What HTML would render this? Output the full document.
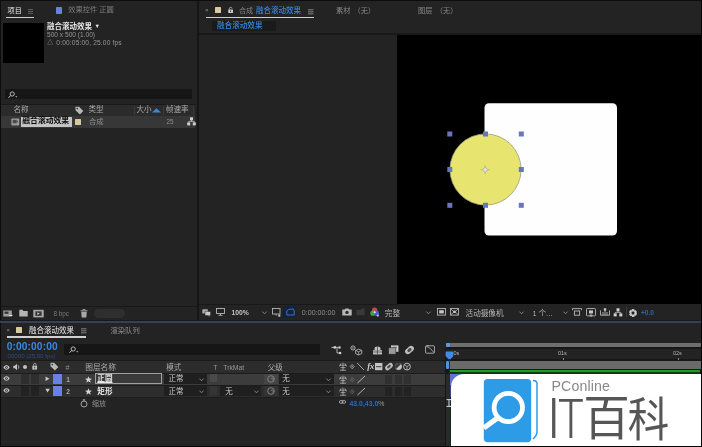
<!DOCTYPE html>
<html lang="zh-CN">
<head>
<meta charset="utf-8">
<title>融合滚动效果</title>
<style>
html,body{margin:0;padding:0;background:#232323;}
body{width:702px;height:447px;position:relative;overflow:hidden;font-family:"Liberation Sans","Noto Sans CJK SC",sans-serif;color:#b4b4b4;font-size:7.5px;line-height:1;}
.a{position:absolute;}
.t{position:absolute;white-space:nowrap;line-height:1;filter:blur(0.35px);}
.w{color:#e6e6e6;}
.g{color:#8f8f8f;}
.b{color:#3a84e2;}
svg{position:absolute;overflow:visible;filter:blur(0.3px);}
</style>
</head>
<body>
<!-- ===== base frame ===== -->
<div class="a" style="left:0;top:0;width:702px;height:1px;background:#0c0c0c"></div>
<div class="a" style="left:0;top:0;width:1px;height:447px;background:#0c0c0c"></div>
<div class="a" style="left:0;top:446px;width:702px;height:1px;background:#050505"></div>
<div class="a" style="left:700.5px;top:0;width:1.5px;height:447px;background:#050505"></div>

<!-- ===== PROJECT PANEL ===== -->
<div id="project">
<div class="t w" style="left:7.5px;top:6.5px;font-size:7.2px">项目</div>
<svg style="left:28px;top:9.2px" width="6" height="6" viewBox="0 0 6 6"><path d="M0 0.6h5M0 2.5h5M0 4.4h5" stroke="#7a7a7a" stroke-width="0.7" fill="none"/></svg>
<div class="a" style="left:6px;top:17px;width:27.5px;height:1.4px;background:#d0d0d0"></div>
<div class="a" style="left:56px;top:7.4px;width:6px;height:6.2px;background:#6a7fe6;border-radius:0.8px"></div>
<div class="t" style="left:68.3px;top:6.3px;font-size:7.25px;color:#7c7c7c">效果控件 正圆</div>
<!-- thumbnail -->
<div class="a" style="left:3.2px;top:22.7px;width:40.4px;height:40px;background:#000"></div>
<div class="t w" style="left:47px;top:23px;font-size:7.5px;font-weight:700">融合滚动效果 <span style="font-size:5.6px;position:relative;top:-0.8px;left:0.5px">▼</span></div>
<div class="t" style="left:47px;top:31.5px;font-size:6.6px;color:#969696">500 x 500 (1.00)</div>
<div class="t" style="left:47.2px;top:39.8px;font-size:5.8px;color:#a0a0a0;font-weight:700">△</div><div class="t" style="left:56.3px;top:39.5px;font-size:6.6px;letter-spacing:0.17px;color:#969696">0:00:05:00, 25.00 fps</div>
<!-- search -->
<div class="a" style="left:5px;top:88.7px;width:187px;height:10.5px;background:#161616;border-radius:1px"></div>
<svg style="left:8px;top:90.5px" width="10" height="8" viewBox="0 0 10 8"><circle cx="4.2" cy="3" r="2.1" stroke="#c8c8c8" stroke-width="0.9" fill="none"/><path d="M2.6 4.6L0.5 6.8" stroke="#c8c8c8" stroke-width="1"/><path d="M7.2 5.2h2.2l-1.1 1.3z" fill="#c8c8c8"/></svg>
<!-- header row -->
<div class="a" style="left:1px;top:104.5px;width:194px;height:11px;background:#2b2b2b"></div>
<div class="a" style="left:1px;top:104px;width:195px;height:1px;background:#191919"></div>
<div class="t" style="left:13.5px;top:106.4px;font-size:7.55px;color:#a8a8a8">名称</div>
<svg style="left:75px;top:105.5px" width="9" height="9" viewBox="0 0 9 9"><path d="M0.5 0.8h3.6l4.2 4.2-3.4 3.4L0.5 4.2z" fill="#b8b8b8"/><circle cx="2.3" cy="2.6" r="0.8" fill="#2b2b2b"/></svg>
<div class="t" style="left:88.5px;top:106.4px;font-size:7.55px;color:#a8a8a8">类型</div>
<div class="a" style="left:133.5px;top:105.5px;width:1px;height:9.5px;background:#3a3a3a"></div>
<div class="t" style="left:136.5px;top:106.4px;font-size:7.55px;color:#a8a8a8">大小</div>
<svg style="left:151.5px;top:107.5px" width="9" height="5" viewBox="0 0 9 5"><path d="M0 4.5L4.5 0.3 9 4.5z" fill="#3f87dc"/></svg>
<div class="a" style="left:162.5px;top:105.5px;width:1px;height:9.5px;background:#3a3a3a"></div>
<div class="t" style="left:166px;top:106.4px;font-size:7.55px;color:#a8a8a8">帧速率</div>
<div class="a" style="left:192.5px;top:105.5px;width:1px;height:9.5px;background:#3a3a3a"></div>
<!-- item row -->
<div class="a" style="left:1px;top:116px;width:194px;height:11.5px;background:#373737"></div>
<svg style="left:10.5px;top:117.8px" width="8.6" height="8" viewBox="0 0 10 9"><rect x="0.4" y="0.4" width="9.2" height="8.2" rx="0.8" fill="#9a9a9a"/><rect x="2" y="2" width="4.5" height="4" fill="#4a4a4a"/><path d="M6.5 2.6l2 1.4-2 1.4z" fill="#4a4a4a"/></svg>
<div class="a" style="left:21px;top:116.5px;width:50.5px;height:10.5px;background:#c4c4c4"></div>
<div class="t" style="left:22.3px;top:117.4px;font-size:7.8px;font-weight:700;color:#0a0a0a">融合滚动效果</div>
<div class="a" style="left:75.3px;top:119px;width:5.5px;height:5.6px;background:#d8c9a0;border-radius:0.6px"></div>
<div class="t g" style="left:89px;top:118px;font-size:7.3px">合成</div>
<div class="t g" style="left:166.5px;top:118.5px;font-size:6.4px">25</div>
<svg style="left:186.5px;top:117px" width="9" height="9" viewBox="0 0 9 9"><rect x="3" y="0.3" width="3" height="3" fill="#d0d0d0"/><rect x="0.2" y="5.4" width="3" height="3" fill="#d0d0d0"/><rect x="5.8" y="5.4" width="3" height="3" fill="#d0d0d0"/><path d="M4.5 3v1.5M1.7 5.4V4.4h5.6v1" stroke="#d0d0d0" stroke-width="0.7" fill="none"/></svg>
<!-- bottom bar -->
<div class="a" style="left:1px;top:305.9px;width:195.5px;height:1px;background:#181818"></div>
<svg style="left:3px;top:308.5px" width="10" height="9" viewBox="0 0 10 9"><rect x="0.3" y="1.5" width="8.5" height="6" fill="#a0a0a0"/><rect x="1.5" y="2.6" width="4" height="2.2" fill="#333"/><path d="M6 6.5h3.5" stroke="#ddd" stroke-width="1"/></svg>
<svg style="left:19px;top:309px" width="9" height="8" viewBox="0 0 9 8"><path d="M0.3 0.8h3.2l0.9 1.1h4.3v5.6H0.3z" fill="#b4b4b4"/></svg>
<svg style="left:33px;top:308.5px" width="11" height="9" viewBox="0 0 11 9"><rect x="0.3" y="0.8" width="10.4" height="7.6" fill="#a8a8a8"/><rect x="2.4" y="2.4" width="6.2" height="4.4" fill="#333"/><path d="M4.4 3.3l2.3 1.3-2.3 1.3z" fill="#ccc"/></svg>
<div class="t" style="left:53.6px;top:311px;font-size:6.3px;color:#7a7a7a">8 bpc</div>
<svg style="left:80px;top:308.5px" width="8" height="9" viewBox="0 0 8 9"><path d="M0.5 1.8h7M2.8 1.6V0.6h2.4v1" stroke="#a8a8a8" stroke-width="0.9" fill="none"/><path d="M1.2 2.8h5.6l-0.5 5.8H1.7z" fill="#a8a8a8"/></svg>
<div class="a" style="left:94px;top:309px;width:30.5px;height:9px;background:#2f2f2f;border-radius:4.5px"></div>
</div>

<!-- vertical divider project/viewer -->
<div class="a" style="left:197.3px;top:1px;width:1.4px;height:320px;background:#161616"></div>

<!-- ===== VIEWER PANEL ===== -->
<div id="viewer">
<!-- tab row -->
<div class="t g" style="left:205px;top:7px;font-size:6px">×</div>
<div class="a" style="left:215px;top:7px;width:6.4px;height:6px;background:#d8c9a0;border-radius:0.6px"></div>
<svg style="left:228px;top:6.7px" width="5.2" height="6.4" viewBox="0 0 6 8" preserveAspectRatio="none"><rect x="0.3" y="3.2" width="5.4" height="4.3" fill="#d0d0d0"/><path d="M1.6 3.2V2a1.5 1.5 0 0 1 3 0" stroke="#d0d0d0" stroke-width="0.9" fill="none"/><rect x="2.4" y="4.4" width="1.2" height="1.8" fill="#333"/></svg>
<div class="t" style="left:238.9px;top:6.7px;font-size:7.2px;color:#848484">合成</div>
<div class="t b" style="left:256px;top:6.8px;font-size:7.5px;font-weight:500">融合滚动效果</div>
<svg style="left:308px;top:8.5px" width="6" height="6" viewBox="0 0 6 6"><path d="M0 0.8h5.5M0 2.8h5.5M0 4.8h5.5" stroke="#9a9a9a" stroke-width="0.8" fill="none"/></svg>
<div class="a" style="left:206px;top:17px;width:107.5px;height:1.4px;background:#d0d0d0"></div>
<div class="t" style="left:336px;top:6.9px;font-size:7.2px;color:#8a8a8a;word-spacing:1.2px">素材 （无）</div>
<div class="t" style="left:418px;top:6.9px;font-size:7.2px;color:#8a8a8a;word-spacing:1.5px">图层 （无）</div>
<!-- breadcrumb -->
<div class="a" style="left:212px;top:21px;width:64px;height:10.1px;background:#1a1a1a"></div>
<div class="t b" style="left:217px;top:22.4px;font-size:7.6px;font-weight:500">融合滚动效果</div>
<div class="a" style="left:199px;top:33px;width:501px;height:1.5px;background:#181818"></div>
<!-- black canvas -->
<div class="a" style="left:396.8px;top:34.5px;width:304px;height:269.5px;background:#000"></div>
<div class="a" style="left:199px;top:303.5px;width:198.5px;height:1px;background:#181818"></div>
<!-- shapes -->
<svg style="left:397px;top:34px;filter:blur(0.4px)" width="303" height="270" viewBox="397 34 303 270">
<rect x="484.5" y="103.2" width="132.5" height="132.3" rx="4.5" fill="#fefefe"/>
<circle cx="485.5" cy="169.5" r="35.6" fill="#e8e470" stroke="#9c9c7c" stroke-width="0.8"/>
<g fill="#6776be">
<rect x="447.3" y="131.5" width="5" height="5"/><rect x="483" y="131.5" width="5" height="5"/><rect x="518.8" y="131.5" width="5" height="5"/>
<rect x="447.3" y="167" width="5" height="5"/><rect x="518.8" y="167" width="5" height="5"/>
<rect x="447.3" y="202.8" width="5" height="5"/><rect x="483" y="202.8" width="5" height="5"/><rect x="518.8" y="202.8" width="5" height="5"/>
</g>
<g stroke="#a8a8a0" stroke-width="0.8" fill="none"><path d="M485.2 166.9l2.6 2.8-2.6 2.8-2.6-2.8z" fill="#e4e4c8"/><path d="M485.2 165.2v1.7M485.2 172.5v1.7M480.8 169.7h1.8M487.8 169.7h1.8"/></g>
</svg>
<!-- viewer toolbar -->
<div id="vtool">
<svg style="left:202.4px;top:308.9px" width="9" height="8" viewBox="0 0 9 8"><rect x="0.3" y="0.3" width="5.6" height="4.2" rx="0.6" fill="#a8a8a8"/><rect x="3" y="2.4" width="5.6" height="4.2" rx="0.6" fill="#c8c8c8" stroke="#232323" stroke-width="0.5"/><path d="M6 6.4l1.4 1.4v-1.4z" fill="#c8c8c8"/></svg>
<svg style="left:216px;top:308.3px" width="9" height="8" viewBox="0 0 9 8"><rect x="0.5" y="0.5" width="8" height="5" stroke="#b4b4b4" stroke-width="0.9" fill="none"/><path d="M4.5 5.5v1.5M2.5 7.3h4" stroke="#b4b4b4" stroke-width="0.9"/></svg>
<div class="t" style="left:231.5px;top:310.1px;font-size:6.8px;color:#c4c4c4;font-weight:700">100%</div>
<svg style="left:261.5px;top:310.6px" width="5" height="4" viewBox="0 0 5 4"><path d="M0.4 0.6L2.5 2.8 4.6 0.6" stroke="#8c8c8c" stroke-width="0.9" fill="none"/></svg>
<svg style="left:272px;top:308.1px" width="9" height="9" viewBox="0 0 9 9"><rect x="0.5" y="0.5" width="7.5" height="5.5" stroke="#b4b4b4" stroke-width="0.9" fill="none"/><path d="M4.2 6v1.6" stroke="#b4b4b4" stroke-width="0.9"/><rect x="6.3" y="6.6" width="2" height="2" fill="#d0d0d0"/></svg>
<div class="a" style="left:283.3px;top:306.2px;width:13px;height:11.4px;background:#14233a"></div>
<svg style="left:285.5px;top:308.3px" width="9" height="8" viewBox="0 0 9 8"><path d="M0.8 7V3l1.6-1.4L7.2 0.9l1 1.9V7z" stroke="#3a7bd0" stroke-width="0.9" fill="none"/></svg>
<div class="t" style="left:301.8px;top:310.4px;font-size:7.1px;color:#8c8c8c">0:00:00:00</div>
<svg style="left:341.5px;top:308.3px" width="10" height="8" viewBox="0 0 10 8"><path d="M0.3 1.6h2.4l0.8-1.2h3l0.8 1.2h2.4v5.8H0.3z" fill="#b8b8b8"/><circle cx="5" cy="4.4" r="1.7" fill="#2a2a2a"/></svg>
<svg style="left:356px;top:308.3px" width="9" height="8" viewBox="0 0 9 8"><path d="M0.5 2h4l2-1.6h2v6.8H0.5z" fill="#3a3a3a"/></svg>
<svg style="left:369.5px;top:306.8px" width="10" height="11" viewBox="0 0 10 11"><circle cx="4.6" cy="3.2" r="2.6" fill="#d04646"/><circle cx="2.9" cy="6.2" r="2.6" fill="#46b446" fill-opacity="0.9"/><circle cx="6.4" cy="6.2" r="2.6" fill="#4a64dc" fill-opacity="0.9"/><circle cx="4.7" cy="5.2" r="1" fill="#e8e8e8"/><circle cx="7.8" cy="8.6" r="1.1" fill="#c8c8f0"/></svg>
<div class="t" style="left:384.8px;top:309.5px;font-size:7.6px;color:#b8b8b8">完整</div>
<svg style="left:425.5px;top:310.6px" width="5" height="4" viewBox="0 0 5 4"><path d="M0.4 0.6L2.5 2.8 4.6 0.6" stroke="#8c8c8c" stroke-width="0.9" fill="none"/></svg>
<svg style="left:437px;top:308.3px" width="9" height="8" viewBox="0 0 9 8"><rect x="0.5" y="0.5" width="8" height="6.6" stroke="#b4b4b4" stroke-width="0.9" fill="none"/><rect x="2.2" y="2.2" width="4.6" height="3.2" fill="#c8c8c8"/></svg>
<svg style="left:450px;top:308.3px" width="9" height="8" viewBox="0 0 9 8"><rect x="0.5" y="0.5" width="8" height="6.6" stroke="#b4b4b4" stroke-width="0.9" fill="none"/><path d="M1 1l2.6 2.6M8 1L5.4 3.6M1 6.6l2.6-2.4M8 6.6L5.4 4.2" stroke="#b4b4b4" stroke-width="0.8"/><rect x="3.2" y="2.6" width="2.6" height="2.4" fill="#c8c8c8"/></svg>
<div class="t" style="left:465.6px;top:309.5px;font-size:7.6px;color:#b8b8b8">活动摄像机</div>
<svg style="left:518.5px;top:310.6px" width="5" height="4" viewBox="0 0 5 4"><path d="M0.4 0.6L2.5 2.8 4.6 0.6" stroke="#8c8c8c" stroke-width="0.9" fill="none"/></svg>
<div class="t" style="left:532.7px;top:309.5px;font-size:7.6px;color:#b8b8b8"><span style="font-size:6.6px">1</span> 个...</div>
<svg style="left:562.5px;top:310.6px" width="5" height="4" viewBox="0 0 5 4"><path d="M0.4 0.6L2.5 2.8 4.6 0.6" stroke="#8c8c8c" stroke-width="0.9" fill="none"/></svg>
<svg style="left:572px;top:308.3px" width="10" height="8" viewBox="0 0 10 8"><path d="M0.5 2.2V0.6h9v1.6" stroke="#b8b8b8" stroke-width="0.9" fill="none"/><rect x="2.4" y="3" width="5.2" height="4.2" stroke="#b8b8b8" stroke-width="0.9" fill="none"/></svg>
<svg style="left:586px;top:307.8px" width="10" height="9" viewBox="0 0 10 9"><rect x="0.5" y="0.5" width="9" height="7.4" rx="0.8" stroke="#b8b8b8" stroke-width="0.9" fill="none"/><rect x="3" y="2.4" width="4" height="3" fill="#c8c8c8"/><path d="M5 5.4v2.8M3.4 7l1.6 1.4L6.6 7" stroke="#c8c8c8" stroke-width="0.8" fill="none"/></svg>
<svg style="left:600px;top:308.3px" width="10" height="8" viewBox="0 0 10 8"><path d="M0.5 2.4v4.8h9V2.4" stroke="#b8b8b8" stroke-width="0.9" fill="none"/><path d="M3 7V4M5 7V0.6M7 7V4" stroke="#b8b8b8" stroke-width="0.9"/><rect x="3.8" y="0.3" width="2.4" height="2.4" fill="#c8c8c8"/></svg>
<svg style="left:613px;top:307.8px" width="10" height="9" viewBox="0 0 9 9"><rect x="3" y="0.3" width="3" height="3" fill="#d0d0d0"/><rect x="0.2" y="5.4" width="3" height="3" fill="#d0d0d0"/><rect x="5.8" y="5.4" width="3" height="3" fill="#d0d0d0"/><path d="M4.5 3v1.5M1.7 5.4V4.4h5.6v1" stroke="#d0d0d0" stroke-width="0.7" fill="none"/></svg>
<div class="a" style="left:625.5px;top:307px;width:1px;height:10px;background:#3a3a3a"></div>
<svg style="left:628px;top:307.8px" width="10" height="10" viewBox="0 0 10 10"><circle cx="5" cy="5" r="2.9" stroke="#c8c8c8" stroke-width="2.2" fill="none" stroke-dasharray="2.3 0.75"/><circle cx="5" cy="5" r="2.4" stroke="#c8c8c8" stroke-width="1.4" fill="none"/></svg>
<div class="t" style="left:641px;top:310.3px;font-size:6.6px;color:#2f62b0;font-weight:700">+0.0</div>
</div>
</div>

<!-- ===== TIMELINE PANEL ===== -->
<div id="timeline">
<div class="a" style="left:0;top:319.8px;width:700.5px;height:1px;background:#16191d"></div>
<div class="a" style="left:0;top:320.8px;width:700.5px;height:2.2px;background:#364254"></div>
<!-- tabs -->
<div class="t g" style="left:6.5px;top:327px;font-size:6px">×</div>
<div class="a" style="left:16px;top:326.8px;width:6.3px;height:6px;background:#d8c9a0;border-radius:0.6px"></div>
<div class="t w" style="left:29px;top:326.6px;font-size:7.5px">融合滚动效果</div>
<svg style="left:80.5px;top:328px" width="6" height="6" viewBox="0 0 6 6"><path d="M0 0.8h5.5M0 2.8h5.5M0 4.8h5.5" stroke="#9a9a9a" stroke-width="0.8" fill="none"/></svg>
<div class="a" style="left:7px;top:336.3px;width:79px;height:1.4px;background:#d0d0d0"></div>
<div class="t g" style="left:110.5px;top:326.8px;font-size:7.3px">渲染队列</div>
<!-- timecode -->
<div class="t" style="left:6.7px;top:342.4px;font-size:10.2px;font-weight:700;color:#3b86e0;letter-spacing:0.12px">0:00:00:00</div>
<div class="t" style="left:7.6px;top:353.1px;font-size:6.1px;color:#2b4c86">00000 (25.00 fps)</div>
<!-- search -->
<div class="a" style="left:64px;top:344.1px;width:256px;height:10.5px;background:#161616;border-radius:1px"></div>
<svg style="left:68.6px;top:345.6px" width="10" height="8" viewBox="0 0 10 8"><circle cx="4.2" cy="3" r="2.1" stroke="#c8c8c8" stroke-width="0.9" fill="none"/><path d="M2.6 4.6L0.5 6.8" stroke="#c8c8c8" stroke-width="1"/><path d="M7.2 5.2h2.2l-1.1 1.3z" fill="#c8c8c8"/></svg>
<!-- top icons -->
<svg style="left:330.5px;top:345.5px" width="11" height="9" viewBox="0 0 11 9"><path d="M0.4 1.4h4.4M4.8 1.4h2.6M6 1.4v5.6h2" stroke="#c0c0c0" stroke-width="0.9" fill="none"/><rect x="2.6" y="0.2" width="2.4" height="2.4" fill="#d0d0d0"/><rect x="7.4" y="0.4" width="2.2" height="2.2" fill="#d0d0d0"/><rect x="8" y="5.9" width="2.2" height="2.2" fill="#d0d0d0"/></svg>
<svg style="left:350px;top:344.5px" width="13" height="11" viewBox="0 0 13 11"><circle cx="3" cy="3" r="2.1" stroke="#c0c0c0" stroke-width="0.9" fill="none"/><circle cx="3" cy="3" r="0.7" fill="#c0c0c0"/><path d="M5.6 5.4l3-1.2 3.2 1.2v3.2l-3.2 1.4-3-1.4z" stroke="#c0c0c0" stroke-width="0.8" fill="none"/><path d="M5.6 5.4l3 1.4 3.2-1.4M8.6 6.8V10" stroke="#c0c0c0" stroke-width="0.7" fill="none"/></svg>
<svg style="left:372px;top:345.5px" width="11" height="9" viewBox="0 0 11 9"><path d="M1 4.2h9v4.2H1z" fill="#c0c0c0"/><path d="M2.6 4V2.2c0-1 1-1.8 2.9-1.8s2.9 0.8 2.9 1.8V4z" fill="#c0c0c0"/><path d="M5.5 0.6v7.6M1 6h9" stroke="#2a2a2a" stroke-width="0.6"/></svg>
<svg style="left:388px;top:345px" width="11" height="10" viewBox="0 0 11 10"><rect x="3" y="0.4" width="7.4" height="6.4" fill="#d0d0d0"/><rect x="0.5" y="2.8" width="7.4" height="6.4" fill="#9a9a9a" stroke="#232323" stroke-width="0.6"/><path d="M4.6 2.2h4.4" stroke="#555" stroke-width="0.7"/></svg>
<svg style="left:404px;top:345px" width="11" height="10" viewBox="0 0 11 10"><g transform="rotate(-40 5.5 5)"><rect x="0.6" y="2.2" width="9.8" height="5.6" rx="2.8" fill="#bdbdbd"/><rect x="3.2" y="3.6" width="4.6" height="2.8" rx="1.4" fill="#4a4a4a"/></g></svg>
<svg style="left:425px;top:344.8px" width="10" height="9" viewBox="0 0 11 10"><rect x="0.6" y="0.9" width="9.8" height="8.2" rx="0.8" stroke="#c4c4c4" stroke-width="0.9" fill="none"/><path d="M1.4 1.6C4 2 7.4 5 9.8 8.4" stroke="#c4c4c4" stroke-width="0.9" fill="none"/><path d="M3 0v1.2" stroke="#c4c4c4" stroke-width="0.9"/></svg>
<!-- header row -->
<div class="a" style="left:1px;top:360.5px;width:443.5px;height:12px;background:#2c2c2c"></div>
<div class="a" style="left:1px;top:360px;width:443.5px;height:1px;background:#1a1a1a"></div>
<svg style="left:3.4px;top:364.8px" width="7" height="5" viewBox="0 0 8 6"><path d="M0.2 3C1.6 0.9 2.8 0.4 4 0.4S6.4 0.9 7.8 3C6.4 5.1 5.2 5.6 4 5.6S1.6 5.1 0.2 3z" fill="#c4c4c4"/><circle cx="4" cy="3" r="1.5" fill="#2a2a2a"/><circle cx="4" cy="3" r="0.6" fill="#c4c4c4"/></svg>
<svg style="left:12.5px;top:363px" width="7" height="8" viewBox="0 0 7 8"><path d="M0.3 2.8h1.6L4 0.8v6.4L1.9 5.2H0.3z" fill="#c4c4c4"/><path d="M5 2.2a2.4 2.4 0 0 1 0 3.6" stroke="#c4c4c4" stroke-width="0.8" fill="none"/></svg>
<div class="a" style="left:23px;top:364.5px;width:4.4px;height:4.4px;border-radius:50%;background:#c4c4c4"></div>
<svg style="left:31.5px;top:363.2px" width="5.4" height="7" viewBox="0 0 6 8"><rect x="0.3" y="3.2" width="5.4" height="4.3" fill="#c4c4c4"/><path d="M1.6 3.2V2a1.5 1.5 0 0 1 3 0v1.2" stroke="#c4c4c4" stroke-width="0.9" fill="none"/><rect x="2.4" y="4.4" width="1.2" height="1.8" fill="#333"/></svg>
<svg style="left:49.5px;top:362px" width="9" height="9" viewBox="0 0 9 9"><path d="M0.5 0.8h3.6l4.2 4.2-3.4 3.4L0.5 4.2z" fill="#b8b8b8"/><circle cx="2.3" cy="2.6" r="0.8" fill="#2b2b2b"/></svg>
<div class="t g" style="left:65.6px;top:364.5px;font-size:6.8px;font-style:italic">#</div>
<div class="t" style="left:85.2px;top:364px;font-size:7.7px;color:#ababab">图层名称</div>
<div class="t" style="left:166.2px;top:364px;font-size:7.5px;color:#ababab">模式</div>
<div class="t" style="left:213.2px;top:365px;font-size:6.8px;color:#979797">T</div><div class="t" style="left:223.3px;top:365px;font-size:6.8px;color:#979797">TrkMat</div>
<div class="t" style="left:267.7px;top:364px;font-size:7.5px;color:#ababab">父级</div>
<svg style="left:339px;top:362px" width="72" height="9" viewBox="0 0 72 9">
<g stroke="#b4b4b4" stroke-width="0.8" fill="none"><path d="M0.5 3.2h7M4 0.6v8M1 8.2h6M2.2 1.4l-1.6 3M5.8 1.4l1.6 3M1.6 5.6h4.8"/></g>
<path d="M13.2 2.4l2 2.2-2 2.2-2-2.2z" stroke="#b4b4b4" stroke-width="0.8" fill="none"/><circle cx="13.2" cy="4.6" r="0.7" fill="#b4b4b4"/>
<path d="M18.2 1L25 8" stroke="#b4b4b4" stroke-width="0.9"/>
<rect x="36" y="1" width="7.4" height="7.2" fill="#c4c4c4"/><path d="M37 4.6h5.4" stroke="#555" stroke-width="1.2"/>
<g transform="rotate(-40 50 4.6)"><rect x="45.6" y="2.2" width="8.8" height="4.8" rx="2.4" fill="#bdbdbd"/><rect x="47.8" y="3.6" width="4.4" height="2" rx="1" fill="#4a4a4a"/></g>
<circle cx="59.5" cy="4.6" r="3.4" fill="#c4c4c4"/><path d="M59.5 1.2a3.4 3.4 0 0 0 0 6.8z" fill="#3a3a3a" transform="rotate(45 59.5 4.6)"/>
<circle cx="68" cy="4.6" r="3.4" stroke="#c4c4c4" stroke-width="0.9" fill="none"/><path d="M65.4 3.2l2.6 1.2 2.6-1.2M68 4.4V8" stroke="#c4c4c4" stroke-width="0.7" fill="none"/>
</svg>
<div class="t" style="left:367.2px;top:362px;font-size:8.6px;font-style:italic;font-weight:700;font-family:'Liberation Serif',serif;color:#d0d0d0">fx</div>
<!-- row 1 -->
<div class="a" style="left:1px;top:373px;width:443.5px;height:11.5px;background:#3c3c3c"></div>
<div class="a" style="left:1px;top:372.5px;width:443.5px;height:0.8px;background:#1c1c1c"></div>
<svg style="left:3.4px;top:376.2px" width="7" height="5" viewBox="0 0 8 6"><path d="M0.2 3C1.6 0.9 2.8 0.4 4 0.4S6.4 0.9 7.8 3C6.4 5.1 5.2 5.6 4 5.6S1.6 5.1 0.2 3z" fill="#c4c4c4"/><circle cx="4" cy="3" r="1.5" fill="#2a2a2a"/><circle cx="4" cy="3" r="0.6" fill="#c4c4c4"/></svg>
<div class="a" style="left:21px;top:374px;width:7.5px;height:9.5px;background:#2e2e2e"></div>
<div class="a" style="left:31px;top:374px;width:7.5px;height:9.5px;background:#2e2e2e"></div>
<svg style="left:44.8px;top:376.3px" width="5.2" height="5.4" viewBox="0 0 6 7"><path d="M0.4 0.5L5.4 3.5 0.4 6.5z" fill="#c8c8c8"/></svg>
<div class="a" style="left:53px;top:374px;width:9px;height:9.5px;background:#6a80e8"></div>
<div class="t" style="left:66.2px;top:376.5px;font-size:6.6px;color:#a8a8a8;font-weight:700">1</div>
<svg style="left:85px;top:375.8px" width="7" height="7" viewBox="0 0 8 8"><path d="M4 0.2l1.1 2.6 2.8 0.2-2.1 1.8 0.7 2.8L4 6.1 1.5 7.6l0.7-2.8L0.1 3l2.8-0.2z" fill="#d2d2d2"/></svg>
<div class="a" style="left:95px;top:373px;width:67px;height:11px;border:0.9px solid #a0a0a0;background:#3a3a3a;box-sizing:border-box"></div>
<div class="t w" style="left:97.3px;top:375.2px;font-size:7.6px;font-weight:700;text-decoration:underline;text-decoration-thickness:0.6px;text-underline-offset:0.5px">正圆</div>
<div class="a" style="left:163.5px;top:373.5px;width:43px;height:10.5px;background:#1f1f1f"></div>
<div class="t" style="left:168.5px;top:375.4px;font-size:7.5px;color:#c8c8c8">正常</div>
<svg style="left:198.8px;top:377.5px" width="5" height="4" viewBox="0 0 5 4"><path d="M0.4 0.6L2.5 2.8 4.6 0.6" stroke="#8c8c8c" stroke-width="0.9" fill="none"/></svg>
<div class="a" style="left:209.6px;top:374.3px;width:7.2px;height:8px;background:#4a4a4a"></div>
<div class="a" style="left:264px;top:373.5px;width:13.5px;height:10.5px;background:#454545"></div>
<svg style="left:267px;top:375px" width="8" height="8" viewBox="0 0 8 8"><circle cx="4" cy="4" r="3.3" stroke="#8a8a8a" stroke-width="0.9" fill="none"/><path d="M4 4a1.2 1.2 0 1 1 1.4 1.4" stroke="#8a8a8a" stroke-width="0.8" fill="none"/></svg>
<div class="a" style="left:278.5px;top:373.5px;width:55px;height:10.5px;background:#1f1f1f"></div>
<div class="t" style="left:282.2px;top:375.4px;font-size:7.5px;color:#c8c8c8">无</div>
<svg style="left:325.6px;top:377.5px" width="5" height="4" viewBox="0 0 5 4"><path d="M0.4 0.6L2.5 2.8 4.6 0.6" stroke="#8c8c8c" stroke-width="0.9" fill="none"/></svg>
<svg style="left:339px;top:374.5px" width="28" height="9" viewBox="0 0 28 9"><g stroke="#b4b4b4" stroke-width="0.8" fill="none"><path d="M0.5 3.2h7M4 0.6v8M1 8.2h6M2.2 1.4l-1.6 3M5.8 1.4l1.6 3M1.6 5.6h4.8"/></g><path d="M13.2 2.4l2 2.2-2 2.2-2-2.2z" stroke="#6a6a6a" stroke-width="0.8" fill="none"/><circle cx="13.2" cy="4.6" r="0.7" fill="#6a6a6a"/><path d="M18.5 8L26 1" stroke="#c4c4c4" stroke-width="0.9"/></svg>
<div class="a" style="left:385px;top:374.5px;width:7px;height:9px;background:#303030"></div>
<div class="a" style="left:394.5px;top:374.5px;width:7px;height:9px;background:#303030"></div>
<div class="a" style="left:404px;top:374.5px;width:7px;height:9px;background:#303030"></div>
<!-- row 2 -->
<div class="a" style="left:1px;top:385px;width:443.5px;height:11.5px;background:#2d2d2d"></div>
<div class="a" style="left:1px;top:384.5px;width:443.5px;height:0.8px;background:#1c1c1c"></div>
<svg style="left:3.4px;top:388.2px" width="7" height="5" viewBox="0 0 8 6"><path d="M0.2 3C1.6 0.9 2.8 0.4 4 0.4S6.4 0.9 7.8 3C6.4 5.1 5.2 5.6 4 5.6S1.6 5.1 0.2 3z" fill="#c4c4c4"/><circle cx="4" cy="3" r="1.5" fill="#2a2a2a"/><circle cx="4" cy="3" r="0.6" fill="#c4c4c4"/></svg>
<div class="a" style="left:21px;top:386px;width:7.5px;height:9.5px;background:#222"></div>
<div class="a" style="left:31px;top:386px;width:7.5px;height:9.5px;background:#222"></div>
<svg style="left:45.3px;top:388.3px" width="5.2" height="5.4" viewBox="0 0 7 6"><path d="M0.4 0.4h6.2L3.5 5.6z" fill="#c8c8c8"/></svg>
<div class="a" style="left:53px;top:386px;width:9px;height:9.5px;background:#6a80e8"></div>
<div class="t" style="left:66.2px;top:388.5px;font-size:6.6px;color:#a8a8a8;font-weight:700">2</div>
<svg style="left:85px;top:388.3px" width="7" height="7" viewBox="0 0 8 8"><path d="M4 0.2l1.1 2.6 2.8 0.2-2.1 1.8 0.7 2.8L4 6.1 1.5 7.6l0.7-2.8L0.1 3l2.8-0.2z" fill="#d2d2d2"/></svg>
<div class="t w" style="left:97.3px;top:387.6px;font-size:7.6px;font-weight:700">矩形</div>
<div class="a" style="left:163.5px;top:385.5px;width:43px;height:10.5px;background:#1f1f1f"></div>
<div class="t" style="left:168.5px;top:387.5px;font-size:7.5px;color:#c8c8c8">正常</div>
<svg style="left:198.8px;top:389.5px" width="5" height="4" viewBox="0 0 5 4"><path d="M0.4 0.6L2.5 2.8 4.6 0.6" stroke="#8c8c8c" stroke-width="0.9" fill="none"/></svg>
<div class="a" style="left:209.6px;top:386.3px;width:7.2px;height:8.5px;background:#353535"></div>
<div class="a" style="left:219.5px;top:385.5px;width:41.5px;height:10.5px;background:#1f1f1f"></div>
<div class="t" style="left:225.3px;top:387.5px;font-size:7.5px;color:#c8c8c8">无</div>
<svg style="left:253.5px;top:389.5px" width="5" height="4" viewBox="0 0 5 4"><path d="M0.4 0.6L2.5 2.8 4.6 0.6" stroke="#8c8c8c" stroke-width="0.9" fill="none"/></svg>
<div class="a" style="left:264px;top:385.5px;width:13.5px;height:10.5px;background:#333"></div>
<svg style="left:267px;top:387px" width="8" height="8" viewBox="0 0 8 8"><circle cx="4" cy="4" r="3.3" stroke="#8a8a8a" stroke-width="0.9" fill="none"/><path d="M4 4a1.2 1.2 0 1 1 1.4 1.4" stroke="#8a8a8a" stroke-width="0.8" fill="none"/></svg>
<div class="a" style="left:278.5px;top:385.5px;width:55px;height:10.5px;background:#1f1f1f"></div>
<div class="t" style="left:282.2px;top:387.5px;font-size:7.5px;color:#c8c8c8">无</div>
<svg style="left:325.6px;top:389.5px" width="5" height="4" viewBox="0 0 5 4"><path d="M0.4 0.6L2.5 2.8 4.6 0.6" stroke="#8c8c8c" stroke-width="0.9" fill="none"/></svg>
<svg style="left:339px;top:386.5px" width="28" height="9" viewBox="0 0 28 9"><g stroke="#b4b4b4" stroke-width="0.8" fill="none"><path d="M0.5 3.2h7M4 0.6v8M1 8.2h6M2.2 1.4l-1.6 3M5.8 1.4l1.6 3M1.6 5.6h4.8"/></g><path d="M13.2 2.4l2 2.2-2 2.2-2-2.2z" stroke="#6a6a6a" stroke-width="0.8" fill="none"/><circle cx="13.2" cy="4.6" r="0.7" fill="#6a6a6a"/><path d="M18.5 8L26 1" stroke="#c4c4c4" stroke-width="0.9"/></svg>
<div class="a" style="left:385px;top:386.5px;width:7px;height:9px;background:#222"></div>
<div class="a" style="left:394.5px;top:386.5px;width:7px;height:9px;background:#222"></div>
<div class="a" style="left:404px;top:386.5px;width:7px;height:9px;background:#222"></div>
<!-- row 3 -->
<div class="a" style="left:1px;top:396.5px;width:443.5px;height:0.8px;background:#1e1e1e"></div>
<svg style="left:80px;top:398.5px" width="8" height="9" viewBox="0 0 8 9"><circle cx="4" cy="5" r="3" stroke="#b0b0b0" stroke-width="0.9" fill="none"/><path d="M2.8 0.8h2.4M4 0.8v1.2" stroke="#b0b0b0" stroke-width="0.9"/></svg>
<div class="t g" style="left:92px;top:399.5px;font-size:7px">缩放</div>
<svg style="left:339.3px;top:400.2px" width="7" height="4" viewBox="0 0 7 4"><rect x="0.4" y="0.5" width="3.6" height="2.8" rx="1.4" stroke="#c0c0c0" stroke-width="0.8" fill="none"/><rect x="3" y="0.5" width="3.6" height="2.8" rx="1.4" stroke="#c0c0c0" stroke-width="0.8" fill="none"/></svg>
<div class="a" style="left:348.3px;top:400.4px;width:31.5px;height:7.8px;background:#1b2436"></div><div class="t" style="left:349.5px;top:401px;font-size:6.9px;color:#3269ba;font-weight:700">43.0,43.0<span style="color:#9a9a9a;font-weight:400">%</span></div>
<div class="a" style="left:1px;top:441px;width:443.5px;height:1px;background:#292929"></div>
<!-- time area -->
<div id="tarea">
<div class="a" style="left:444.6px;top:348px;width:1.3px;height:98px;background:#161616"></div>
<div class="a" style="left:445.5px;top:347.4px;width:255px;height:1.6px;background:#171717"></div>
<div class="a" style="left:445.5px;top:359.4px;width:255px;height:1.6px;background:#171717"></div>
<div class="a" style="left:445.5px;top:369.4px;width:255px;height:4.6px;background:#171717"></div>
<!-- navigator -->
<div class="a" style="left:445.5px;top:343px;width:255px;height:4.4px;background:#6e6e6e;border-radius:1px"></div>
<div class="a" style="left:445.5px;top:343px;width:4.6px;height:4.4px;background:#5a98e4;border-radius:1px"></div>
<!-- ruler -->
<div class="t" style="left:453.5px;top:350.6px;font-size:5.5px;color:#b4b4b4">0s</div>
<div class="t" style="left:558px;top:350.6px;font-size:5.5px;color:#b4b4b4">01s</div>
<div class="t" style="left:673px;top:350.6px;font-size:5.5px;color:#b4b4b4">02s</div>
<div class="a" style="left:562.5px;top:357.5px;width:1px;height:2px;background:#8a8a8a"></div>
<div class="a" style="left:677.5px;top:357.5px;width:1px;height:2px;background:#8a8a8a"></div>
<!-- work area -->
<div class="a" style="left:449.5px;top:361px;width:251px;height:8px;background:#6a6a6a"></div>
<div class="a" style="left:445.8px;top:361px;width:3.7px;height:8.4px;background:#4f92e2;border-radius:1px"></div>
<!-- green cache line -->
<div class="a" style="left:450px;top:370px;width:250px;height:2.6px;background:#1f9a22"></div>
<div class="a" style="left:450px;top:372.4px;width:250px;height:1.2px;background:#103c12"></div>
<!-- layer bars -->
<div class="a" style="left:450px;top:373.6px;width:250px;height:11px;background:#6470d0"></div>
<div class="a" style="left:450px;top:385px;width:250px;height:11.5px;background:#3c4384"></div>
<div class="a" style="left:446px;top:373.5px;width:4px;height:72px;background:#2a2a2a"></div>
<!-- playhead -->
<svg style="left:444.5px;top:351px" width="9" height="10" viewBox="0 0 9 10"><path d="M0.6 0.5h7.8v4.6L4.5 9.3 0.6 5.1z" fill="#3f8be6"/></svg>
<div class="a" style="left:448.6px;top:359px;width:1px;height:87px;background:#1b2c48"></div>
<svg style="left:445.5px;top:398.5px" width="6" height="8" viewBox="0 0 6 8"><path d="M0.5 0.6h5M0.5 7.4h5M3 0.6v6.8" stroke="#d8d8d8" stroke-width="1" fill="none"/></svg>
</div>
</div>

<!-- ===== WATERMARK ===== -->
<div id="wm">
<div class="a" style="left:450.5px;top:374px;width:250px;height:72px;background:#fff;border-top-left-radius:13px"></div>
<svg style="left:480px;top:376px;filter:blur(0.4px)" width="62" height="70" viewBox="480 376 62 70">
<rect x="483.8" y="379" width="47.4" height="63.2" rx="4" fill="#2d9be6"/>
<circle cx="508.3" cy="407.5" r="14.2" stroke="#fff" stroke-width="4.8" fill="none"/>
<path d="M498 417.6L483.8 428" stroke="#fff" stroke-width="5.2"/>
<path d="M533 380.6c2.6 0.2 4 1.2 4 2.8v48.6c0 2.4-1.4 4.6-4 7" stroke="#2d9be6" stroke-width="1.5" fill="none"/>
</svg>
<div class="t" style="left:551.5px;top:378.6px;font-size:14.2px;color:#888;letter-spacing:0.1px">PConline</div>
<svg style="left:545px;top:390px;filter:blur(0.4px)" width="130" height="56" viewBox="545 390 130 56" font-family="'Noto Sans CJK SC',sans-serif" fill="#565656">
<text font-size="100" font-weight="400" transform="translate(548.44 437.80) scale(0.3556 0.5411)">I</text>
<text font-size="100" font-weight="300" transform="translate(557.62 437.80) scale(0.4596 0.5411)">T</text>
<text font-size="100" font-weight="400" transform="translate(583.20 435.39) scale(0.4659 0.4759)">百</text>
<text font-size="100" font-weight="400" transform="translate(627.75 436.00) scale(0.4151 0.4620)">科</text>
</svg>
</div>
</body>
</html>
